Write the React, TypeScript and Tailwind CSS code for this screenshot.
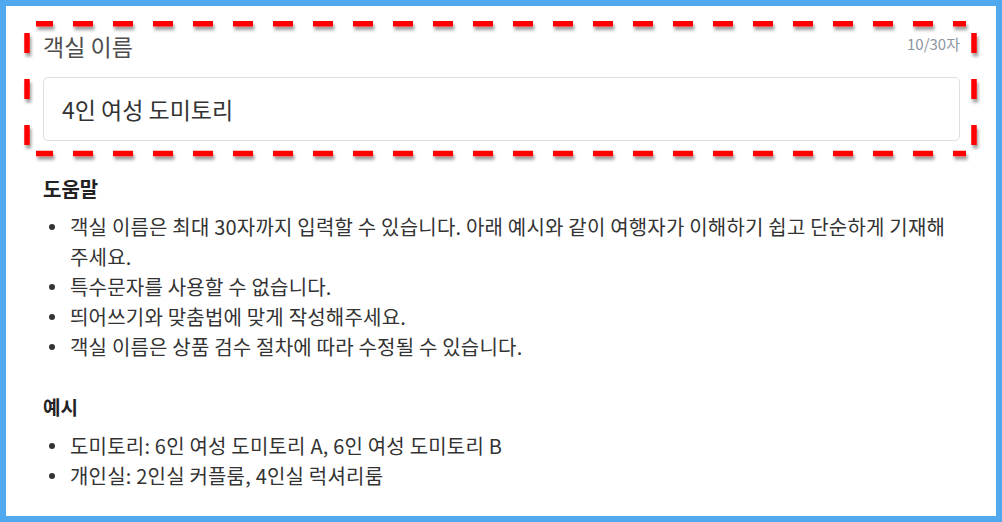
const HELP_ITEMS = [
  "객실 이름은 최대 30자까지 입력할 수 있습니다. 아래 예시와 같이 여행자가 이해하기 쉽고 단순하게 기재해주세요.",
  "특수문자를 사용할 수 없습니다.",
  "띄어쓰기와 맞춤법에 맞게 작성해주세요.",
  "객실 이름은 상품 검수 절차에 따라 수정될 수 있습니다.",
];

const EXAMPLES = [
  "도미토리: 6인 여성 도미토리 A, 6인 여성 도미토리 B",
  "개인실: 2인실 커플룸, 4인실 럭셔리룸",
];

const BulletList = ({ items }: { items: string[] }) => (
  <ul className="flex flex-col">
    {items.map((text) => (
      <li key={text} className="flex text-[20px] leading-[30px] tracking-[0.2px] text-[#333]">
        <span className="w-[27px] h-[30px] shrink-0 flex items-center pl-[6px]">
          <span className="w-[6px] h-[6px] rounded-full bg-[#333]" />
        </span>
        <span>{text}</span>
      </li>
    ))}
  </ul>
);

// dashed highlight drawn over the name field
const DashedHighlight = () => (
  <svg
    className="absolute -left-[6px] -top-[6px] pointer-events-none"
    width={1002}
    height={522}
    viewBox="0 0 1002 522"
  >
    <defs>
      <filter id="dash-shadow" x="-10%" y="-10%" width="120%" height="130%">
        <feDropShadow dx="1.5" dy="3.5" stdDeviation="1.6" floodColor="#000" floodOpacity="0.38" />
      </filter>
    </defs>
    <g stroke="#ff0000" strokeWidth={5.5} fill="none" filter="url(#dash-shadow)">
      <path d="M36 23.7 H966" strokeDasharray="20 20" strokeDashoffset={3} />
      <path d="M36 153.5 H966" strokeDasharray="20 20" strokeDashoffset={3} />
      <path d="M27 33 V145" strokeDasharray="20 26" />
      <path d="M974 33 V145" strokeDasharray="20 26" />
    </g>
  </svg>
);

export default function App() {
  return (
    <div className="w-[1002px] h-[522px] border-[6px] border-[#50a9ef] bg-white relative overflow-hidden font-['Noto_Sans_CJK_KR','Noto_Sans',sans-serif]">
      <div className="pl-[37px] pr-[36px] pt-[26px]">
        {/* Name field */}
        <div className="flex items-center justify-between h-[28px]">
          <span className="text-[23px] leading-[28px] text-[#4d4d4d]">객실 이름</span>
          <span className="text-[15px] text-[#8d96a0] -mt-[3px]">10/30자</span>
        </div>
        <div className="mt-[17px] h-[64px] border border-[#dcdfe3] rounded-[5px] px-[18px] flex items-center">
          <span className="text-[23px] text-[#333]">4인 여성 도미토리</span>
        </div>

        {/* Help */}
        <h4 className="mt-[35px] text-[20px] leading-[26px] font-bold text-[#222]">도움말</h4>
        <div className="mt-[10px]">
          <BulletList items={HELP_ITEMS} />
        </div>

        {/* Examples */}
        <h4 className="mt-[32px] text-[19px] leading-[26px] font-bold text-[#222]">예시</h4>
        <div className="mt-[11px]">
          <BulletList items={EXAMPLES} />
        </div>
      </div>
      <DashedHighlight />
    </div>
  );
}
